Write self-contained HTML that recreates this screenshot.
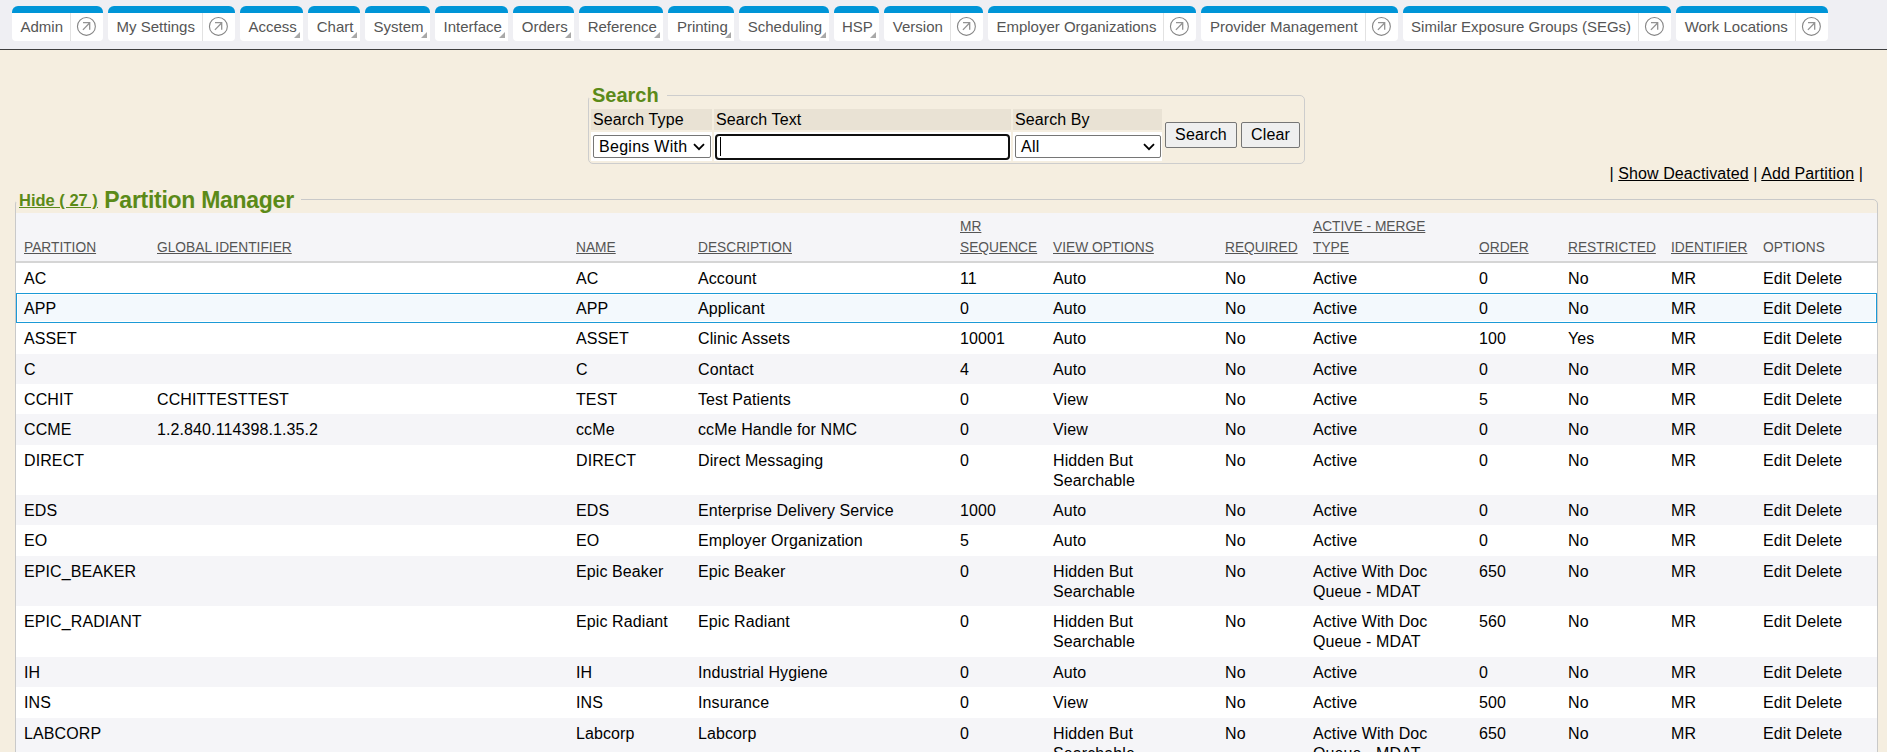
<!DOCTYPE html>
<html><head><meta charset="utf-8">
<style>
*{box-sizing:border-box}
html,body{margin:0;padding:0}
body{width:1887px;height:752px;overflow:hidden;background:#f5eee0;font-family:"Liberation Sans",sans-serif;color:#000;position:relative}
#hdr{position:absolute;left:0;top:0;width:1887px;height:50px;background:#efeff3;border-bottom:1px solid #3f3f3f}
#tabs{position:absolute;left:12px;top:6px;display:flex;gap:5px}
.tab{position:relative;height:35px;background:#fff;border-top:7px solid #0095d7;border-radius:6px 6px 4px 4px;font-size:15px;color:#555;white-space:nowrap;display:flex}
.tab .t{padding:0 6.5px 0 8.5px;line-height:28px;height:28px}
.tab.ic .t{padding-right:7px}
.tab .sep{width:1px;background:#e2e2e2;height:28px}
.tab .ico{width:32px;height:28px;position:relative}
.tab .ico svg{position:absolute;left:5px;top:3px}
.tab:not(.ic){border-bottom-right-radius:0}
.tab .tri{position:absolute;right:3px;bottom:3px;width:0;height:0;border-left:6px solid transparent;border-bottom:6px solid #a8a8a8}
#sfs{position:absolute;left:588px;top:95px;width:717px;height:69px;border:1px solid #cdcdcd;border-radius:5px}
.mask{position:absolute;background:#f5eee0}
#slg{position:absolute;left:588px;top:83.2px;padding:0 9px 0 4px;font-weight:bold;font-size:20px;color:#5b8a18;line-height:24px}
.sh{letter-spacing:0.1px;position:absolute;top:109px;height:21px;background:#e9e2d4;font-size:16px;line-height:21px;padding-left:2px}
.sw{position:absolute;top:132px;height:29px;background:#fff}
.sel{letter-spacing:0.28px;position:absolute;top:135px;height:23px;border:1px solid #767676;border-radius:2px;background:#fff;font-size:16px;line-height:21px;padding-left:5px}
.sel .chev{position:absolute;right:5px;top:6.8px}
#stxt{position:absolute;left:715px;top:134px;width:295px;height:26px;border:2px solid #101010;border-radius:4px;background:#fff}
#caret{position:absolute;left:3px;top:1px;width:1px;height:19px;background:#000}
.btn{letter-spacing:0.2px;position:absolute;top:122px;height:26px;border:1px solid #767676;border-radius:2px;background:#efefef;font-size:16px;line-height:24px;text-align:center}
#links{position:absolute;right:24px;top:164px;font-size:16px;letter-spacing:0.1px;line-height:20px;white-space:pre}
#gfs{position:absolute;left:15px;top:199px;width:1863px;height:600px;border:1px solid #c9c9c9;border-radius:5px}
#glg{position:absolute;left:19px;top:185.5px;font-weight:bold;color:#5b8a18;white-space:pre;line-height:28px}
#glg .hide{font-size:16.5px;position:relative;top:-1.2px}
#glg .pm{font-size:23px;letter-spacing:-0.28px;margin-left:2px}
#grid{position:absolute;left:16px;top:213px;width:1861px;border-collapse:collapse;table-layout:fixed;font-size:16px}
#grid th{background:#f5f5f8;font-weight:normal;color:#555;font-size:13.75px;line-height:20.5px;text-align:left;vertical-align:bottom;padding:4.2px 8px 2.8px;border-bottom:2px solid #d5d5d5;white-space:nowrap}
#grid td{letter-spacing:0.1px;padding:6px 8px 0;line-height:20.3px;vertical-align:top;white-space:nowrap}
#grid tr{background:#fff}
#grid tr.alt{background:#f5f5f8}
#grid tr.hov td{background:#f3f9fd}
#hovbox{position:absolute;left:16px;top:293px;width:1861px;height:30px;border:1px solid #1b9ad6;box-shadow:inset 0 0 0 1px #fff}
</style></head><body>
<div id="hdr">
<div id="tabs">
<div class="tab ic"><span class="t">Admin</span><span class="sep"></span><span class="ico"><svg width="20" height="20" viewBox="0 0 20 20"><circle cx="10.4" cy="10.4" r="8.95" fill="none" stroke="#858585" stroke-width="1.1"/><path d="M6.9 13.9L13.6 7M7 6.7H13.7V13.8" fill="none" stroke="#939393" stroke-width="1.3"/></svg></span></div>
<div class="tab ic"><span class="t">My Settings</span><span class="sep"></span><span class="ico"><svg width="20" height="20" viewBox="0 0 20 20"><circle cx="10.4" cy="10.4" r="8.95" fill="none" stroke="#858585" stroke-width="1.1"/><path d="M6.9 13.9L13.6 7M7 6.7H13.7V13.8" fill="none" stroke="#939393" stroke-width="1.3"/></svg></span></div>
<div class="tab"><span class="t">Access</span><span class="tri"></span></div>
<div class="tab"><span class="t">Chart</span><span class="tri"></span></div>
<div class="tab"><span class="t">System</span><span class="tri"></span></div>
<div class="tab"><span class="t">Interface</span><span class="tri"></span></div>
<div class="tab"><span class="t">Orders</span><span class="tri"></span></div>
<div class="tab"><span class="t">Reference</span><span class="tri"></span></div>
<div class="tab"><span class="t">Printing</span><span class="tri"></span></div>
<div class="tab"><span class="t">Scheduling</span><span class="tri"></span></div>
<div class="tab"><span class="t">HSP</span><span class="tri"></span></div>
<div class="tab ic"><span class="t">Version</span><span class="sep"></span><span class="ico"><svg width="20" height="20" viewBox="0 0 20 20"><circle cx="10.4" cy="10.4" r="8.95" fill="none" stroke="#858585" stroke-width="1.1"/><path d="M6.9 13.9L13.6 7M7 6.7H13.7V13.8" fill="none" stroke="#939393" stroke-width="1.3"/></svg></span></div>
<div class="tab ic"><span class="t">Employer Organizations</span><span class="sep"></span><span class="ico"><svg width="20" height="20" viewBox="0 0 20 20"><circle cx="10.4" cy="10.4" r="8.95" fill="none" stroke="#858585" stroke-width="1.1"/><path d="M6.9 13.9L13.6 7M7 6.7H13.7V13.8" fill="none" stroke="#939393" stroke-width="1.3"/></svg></span></div>
<div class="tab ic"><span class="t">Provider Management</span><span class="sep"></span><span class="ico"><svg width="20" height="20" viewBox="0 0 20 20"><circle cx="10.4" cy="10.4" r="8.95" fill="none" stroke="#858585" stroke-width="1.1"/><path d="M6.9 13.9L13.6 7M7 6.7H13.7V13.8" fill="none" stroke="#939393" stroke-width="1.3"/></svg></span></div>
<div class="tab ic"><span class="t">Similar Exposure Groups (SEGs)</span><span class="sep"></span><span class="ico"><svg width="20" height="20" viewBox="0 0 20 20"><circle cx="10.4" cy="10.4" r="8.95" fill="none" stroke="#858585" stroke-width="1.1"/><path d="M6.9 13.9L13.6 7M7 6.7H13.7V13.8" fill="none" stroke="#939393" stroke-width="1.3"/></svg></span></div>
<div class="tab ic"><span class="t">Work Locations</span><span class="sep"></span><span class="ico"><svg width="20" height="20" viewBox="0 0 20 20"><circle cx="10.4" cy="10.4" r="8.95" fill="none" stroke="#858585" stroke-width="1.1"/><path d="M6.9 13.9L13.6 7M7 6.7H13.7V13.8" fill="none" stroke="#939393" stroke-width="1.3"/></svg></span></div>
</div>
</div>
<div id="sfs"></div><div class="mask" style="left:589px;top:92px;width:78px;height:6px"></div>
<div id="slg">Search</div>
<div class="sh" style="left:591px;width:121px">Search Type</div>
<div class="sh" style="left:714px;width:297px">Search Text</div>
<div class="sh" style="left:1013px;width:149px">Search By</div>
<div class="sw" style="left:591px;width:121px"></div>
<div class="sw" style="left:714px;width:297px"></div>
<div class="sw" style="left:1013px;width:149px"></div>
<div class="sel" style="left:593px;width:118px">Begins With<svg class="chev" width="12" height="8" viewBox="0 0 12 8"><path d="M1 1.2L6 6.2L11 1.2" fill="none" stroke="#000" stroke-width="1.8"/></svg></div>
<div id="stxt"><span id="caret"></span></div>
<div class="sel" style="left:1015px;width:146px">All<svg class="chev" width="12" height="8" viewBox="0 0 12 8"><path d="M1 1.2L6 6.2L11 1.2" fill="none" stroke="#000" stroke-width="1.8"/></svg></div>
<div class="btn" style="left:1165px;width:72px">Search</div>
<div class="btn" style="left:1241px;width:59px">Clear</div>
<div id="links">| <u>Show Deactivated</u> | <u>Add Partition</u> |</div>

<div id="gfs"></div><div class="mask" style="left:16px;top:196px;width:285px;height:6px"></div><div id="glg"><u class="hide">Hide ( 27 )</u> <span class="pm">Partition Manager</span></div>
<table id="grid"><colgroup><col style="width:133px"><col style="width:419px"><col style="width:122px"><col style="width:262px"><col style="width:93px"><col style="width:172px"><col style="width:88px"><col style="width:166px"><col style="width:89px"><col style="width:103px"><col style="width:92px"><col style="width:122px"></colgroup>
<thead><tr>
<th><u>PARTITION</u></th>
<th><u>GLOBAL IDENTIFIER</u></th>
<th><u>NAME</u></th>
<th><u>DESCRIPTION</u></th>
<th><u>MR</u><br><u>SEQUENCE</u></th>
<th><u>VIEW OPTIONS</u></th>
<th><u>REQUIRED</u></th>
<th><u>ACTIVE - MERGE</u><br><u>TYPE</u></th>
<th><u>ORDER</u></th>
<th><u>RESTRICTED</u></th>
<th><u>IDENTIFIER</u></th>
<th>OPTIONS</th>
</tr></thead><tbody>
<tr class="" style="height:31px"><td>AC</td><td></td><td>AC</td><td>Account</td><td>11</td><td>Auto</td><td>No</td><td>Active</td><td>0</td><td>No</td><td>MR</td><td>Edit Delete</td></tr>
<tr class="hov" style="height:30px"><td>APP</td><td></td><td>APP</td><td>Applicant</td><td>0</td><td>Auto</td><td>No</td><td>Active</td><td>0</td><td>No</td><td>MR</td><td>Edit Delete</td></tr>
<tr class="" style="height:31px"><td>ASSET</td><td></td><td>ASSET</td><td>Clinic Assets</td><td>10001</td><td>Auto</td><td>No</td><td>Active</td><td>100</td><td>Yes</td><td>MR</td><td>Edit Delete</td></tr>
<tr class="alt" style="height:30px"><td>C</td><td></td><td>C</td><td>Contact</td><td>4</td><td>Auto</td><td>No</td><td>Active</td><td>0</td><td>No</td><td>MR</td><td>Edit Delete</td></tr>
<tr class="" style="height:30px"><td>CCHIT</td><td>CCHITTESTTEST</td><td>TEST</td><td>Test Patients</td><td>0</td><td>View</td><td>No</td><td>Active</td><td>5</td><td>No</td><td>MR</td><td>Edit Delete</td></tr>
<tr class="alt" style="height:31px"><td>CCME</td><td>1.2.840.114398.1.35.2</td><td>ccMe</td><td>ccMe Handle for NMC</td><td>0</td><td>View</td><td>No</td><td>Active</td><td>0</td><td>No</td><td>MR</td><td>Edit Delete</td></tr>
<tr class="" style="height:50px"><td>DIRECT</td><td></td><td>DIRECT</td><td>Direct Messaging</td><td>0</td><td>Hidden But<br>Searchable</td><td>No</td><td>Active</td><td>0</td><td>No</td><td>MR</td><td>Edit Delete</td></tr>
<tr class="alt" style="height:30px"><td>EDS</td><td></td><td>EDS</td><td>Enterprise Delivery Service</td><td>1000</td><td>Auto</td><td>No</td><td>Active</td><td>0</td><td>No</td><td>MR</td><td>Edit Delete</td></tr>
<tr class="" style="height:31px"><td>EO</td><td></td><td>EO</td><td>Employer Organization</td><td>5</td><td>Auto</td><td>No</td><td>Active</td><td>0</td><td>No</td><td>MR</td><td>Edit Delete</td></tr>
<tr class="alt" style="height:50px"><td>EPIC_BEAKER</td><td></td><td>Epic Beaker</td><td>Epic Beaker</td><td>0</td><td>Hidden But<br>Searchable</td><td>No</td><td>Active With Doc<br>Queue - MDAT</td><td>650</td><td>No</td><td>MR</td><td>Edit Delete</td></tr>
<tr class="" style="height:51px"><td>EPIC_RADIANT</td><td></td><td>Epic Radiant</td><td>Epic Radiant</td><td>0</td><td>Hidden But<br>Searchable</td><td>No</td><td>Active With Doc<br>Queue - MDAT</td><td>560</td><td>No</td><td>MR</td><td>Edit Delete</td></tr>
<tr class="alt" style="height:30px"><td>IH</td><td></td><td>IH</td><td>Industrial Hygiene</td><td>0</td><td>Auto</td><td>No</td><td>Active</td><td>0</td><td>No</td><td>MR</td><td>Edit Delete</td></tr>
<tr class="" style="height:31px"><td>INS</td><td></td><td>INS</td><td>Insurance</td><td>0</td><td>View</td><td>No</td><td>Active</td><td>500</td><td>No</td><td>MR</td><td>Edit Delete</td></tr>
<tr class="alt" style="height:50px"><td>LABCORP</td><td></td><td>Labcorp</td><td>Labcorp</td><td>0</td><td>Hidden But<br>Searchable</td><td>No</td><td>Active With Doc<br>Queue - MDAT</td><td>650</td><td>No</td><td>MR</td><td>Edit Delete</td></tr>
</tbody></table><div id="hovbox"></div>
</body></html>
